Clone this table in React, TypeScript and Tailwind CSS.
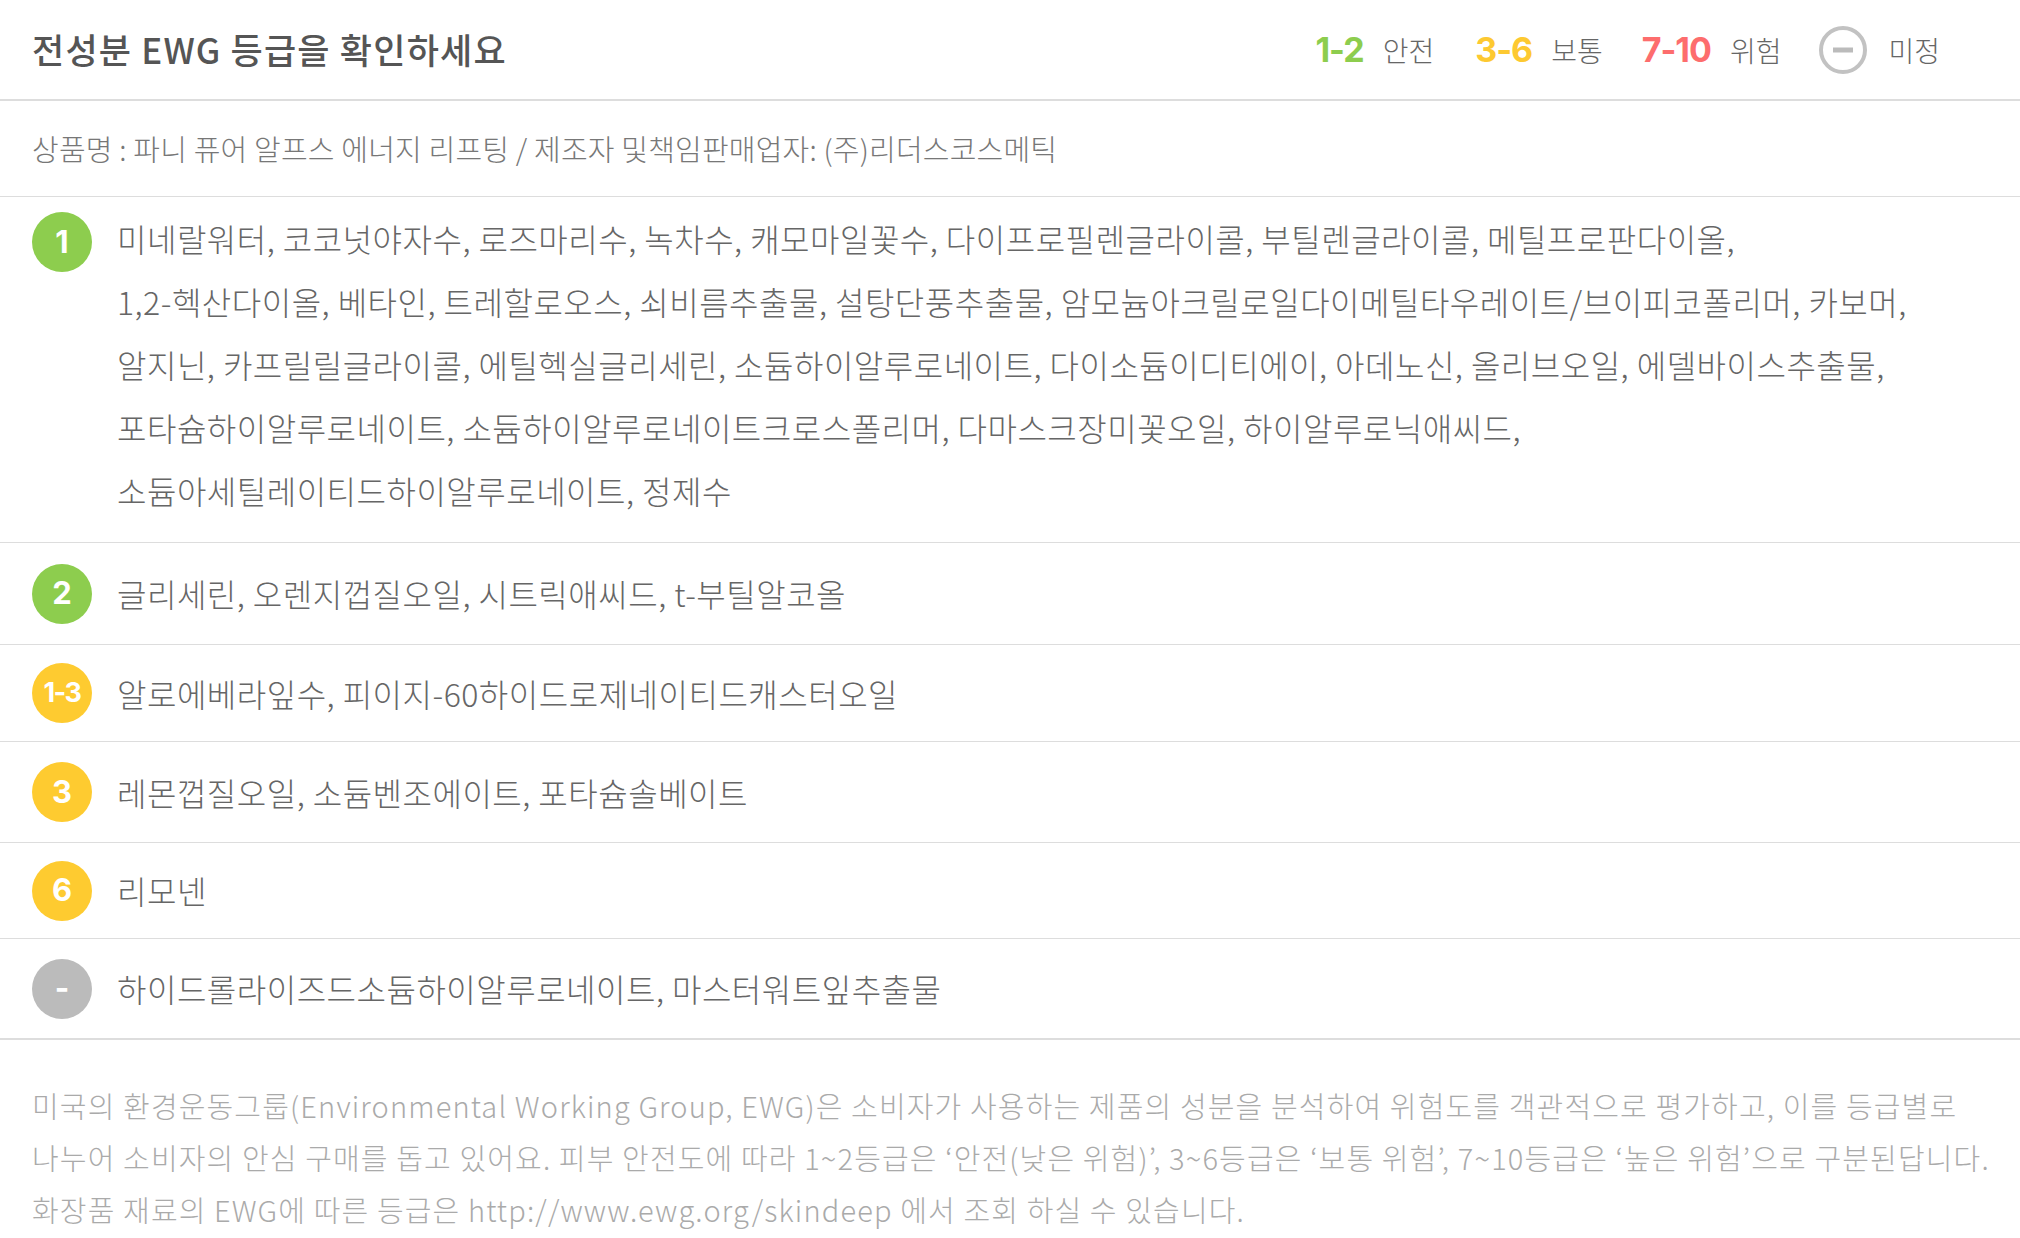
import React from "react";

const KR = "font-['Noto_Sans_CJK_KR','Noto_Sans',sans-serif]";

function Badge({ label, color, small }: { label: string; color: string; small?: boolean }) {
  return (
    <div
      className={`flex h-[60px] w-[60px] shrink-0 items-center justify-center rounded-full ${color} font-['Inter',sans-serif] font-bold text-white ${small ? "text-[27px] tracking-[-1.5px]" : "text-[31px]"}`}
    >
      {label}
    </div>
  );
}

const ING = "whitespace-nowrap text-[32px] font-light tracking-[0.5px] leading-[63px] text-[#666666]";

function SingleRow({ label, color, text, h, small }: { label: string; color: string; text: string; h: string; small?: boolean }) {
  return (
    <div className={`flex ${h} items-center gap-[25px] border-b border-[#dddddd] pl-[32px]`}>
      <Badge label={label} color={color} small={small} />
      <div className={ING}>{text}</div>
    </div>
  );
}

const row1 = [
  "미네랄워터, 코코넛야자수, 로즈마리수, 녹차수, 캐모마일꽃수, 다이프로필렌글라이콜, 부틸렌글라이콜, 메틸프로판다이올,",
  "1,2-헥산다이올, 베타인, 트레할로오스, 쇠비름추출물, 설탕단풍추출물, 암모늄아크릴로일다이메틸타우레이트/브이피코폴리머, 카보머,",
  "알지닌, 카프릴릴글라이콜, 에틸헥실글리세린, 소듐하이알루로네이트, 다이소듐이디티에이, 아데노신, 올리브오일, 에델바이스추출물,",
  "포타슘하이알루로네이트, 소듐하이알루로네이트크로스폴리머, 다마스크장미꽃오일, 하이알루로닉애씨드,",
  "소듐아세틸레이티드하이알루로네이트, 정제수",
];

const footer = [
  "미국의 환경운동그룹(Environmental Working Group, EWG)은 소비자가 사용하는 제품의 성분을 분석하여 위험도를 객관적으로 평가하고, 이를 등급별로",
  "나누어 소비자의 안심 구매를 돕고 있어요. 피부 안전도에 따라 1~2등급은 ‘안전(낮은 위험)’, 3~6등급은 ‘보통 위험’, 7~10등급은 ‘높은 위험’으로 구분된답니다.",
  "화장품 재료의 EWG에 따른 등급은 http://www.ewg.org/skindeep 에서 조회 하실 수 있습니다.",
];

export default function App() {
  return (
    <div className={`w-[2020px] min-h-[1238px] bg-white ${KR}`}>
      {/* header */}
      <div className="flex h-[101px] items-center justify-between border-b-2 border-[#dddddd] pl-[32px] pr-[80px]">
        <div className="whitespace-nowrap text-[35px] font-medium tracking-[1.2px] text-[#555555]">전성분 EWG 등급을 확인하세요</div>
        <div className="flex items-center">
          <span className="font-['Inter',sans-serif] text-[34px] font-bold tracking-[-1px] text-[#8dcd4e]">1-2</span>
          <span className="ml-[19px] text-[28px] font-light text-[#666666]">안전</span>
          <span className="ml-[41px] font-['Inter',sans-serif] text-[34px] font-bold tracking-[-1px] text-[#fdc931]">3-6</span>
          <span className="ml-[19px] text-[28px] font-light text-[#666666]">보통</span>
          <span className="ml-[39px] font-['Inter',sans-serif] text-[34px] font-bold tracking-[-1px] text-[#fd6d6d]">7-10</span>
          <span className="ml-[19px] text-[28px] font-light text-[#666666]">위험</span>
          <svg className="ml-[38px]" width="48" height="48" viewBox="0 0 48 48">
            <circle cx="24" cy="24" r="22" fill="none" stroke="#c2c2c2" strokeWidth="4" />
            <rect x="14" y="21.5" width="20" height="5" fill="#bbbbbb" />
          </svg>
          <span className="ml-[21px] text-[28px] font-light text-[#666666]">미정</span>
        </div>
      </div>

      {/* product */}
      <div className="flex h-[96px] items-center border-b border-[#dddddd] pl-[32px]">
        <div className="whitespace-nowrap text-[29px] font-light tracking-[0.2px] text-[#777777]">
          상품명 : 파니 퓨어 알프스 에너지 리프팅 / 제조자 및책임판매업자: (주)리더스코스메틱
        </div>
      </div>

      {/* row 1 */}
      <div className="flex h-[346px] items-start gap-[25px] border-b border-[#dddddd] pl-[32px] pt-[10px]">
        <div className="mt-[5px]">
          <Badge label="1" color="bg-[#8dcd4e]" />
        </div>
        <div>
          {row1.map((l, i) => (
            <div key={i} className={ING}>
              {l}
            </div>
          ))}
        </div>
      </div>

      <SingleRow label="2" color="bg-[#8dcd4e]" text="글리세린, 오렌지껍질오일, 시트릭애씨드, t-부틸알코올" h="h-[102px]" />
      <SingleRow label="1-3" color="bg-[#fecb30]" text="알로에베라잎수, 피이지-60하이드로제네이티드캐스터오일" h="h-[97px]" small />
      <SingleRow label="3" color="bg-[#fecb30]" text="레몬껍질오일, 소듐벤조에이트, 포타슘솔베이트" h="h-[101px]" />
      <SingleRow label="6" color="bg-[#fecb30]" text="리모넨" h="h-[96px]" />
      <div className="flex h-[101px] items-center gap-[25px] border-b-2 border-[#dddddd] pl-[32px]">
        <Badge label="-" color="bg-[#bbbbbb]" />
        <div className={ING}>하이드롤라이즈드소듐하이알루로네이트, 마스터워트잎추출물</div>
      </div>

      {/* footer */}
      <div className="pl-[32px] pt-[39px] text-[29px] font-light tracking-[1.15px] leading-[52px] text-[#aaaaaa]">
        {footer.map((l, i) => (
          <div key={i} className="whitespace-nowrap">
            {l}
          </div>
        ))}
      </div>
    </div>
  );
}
